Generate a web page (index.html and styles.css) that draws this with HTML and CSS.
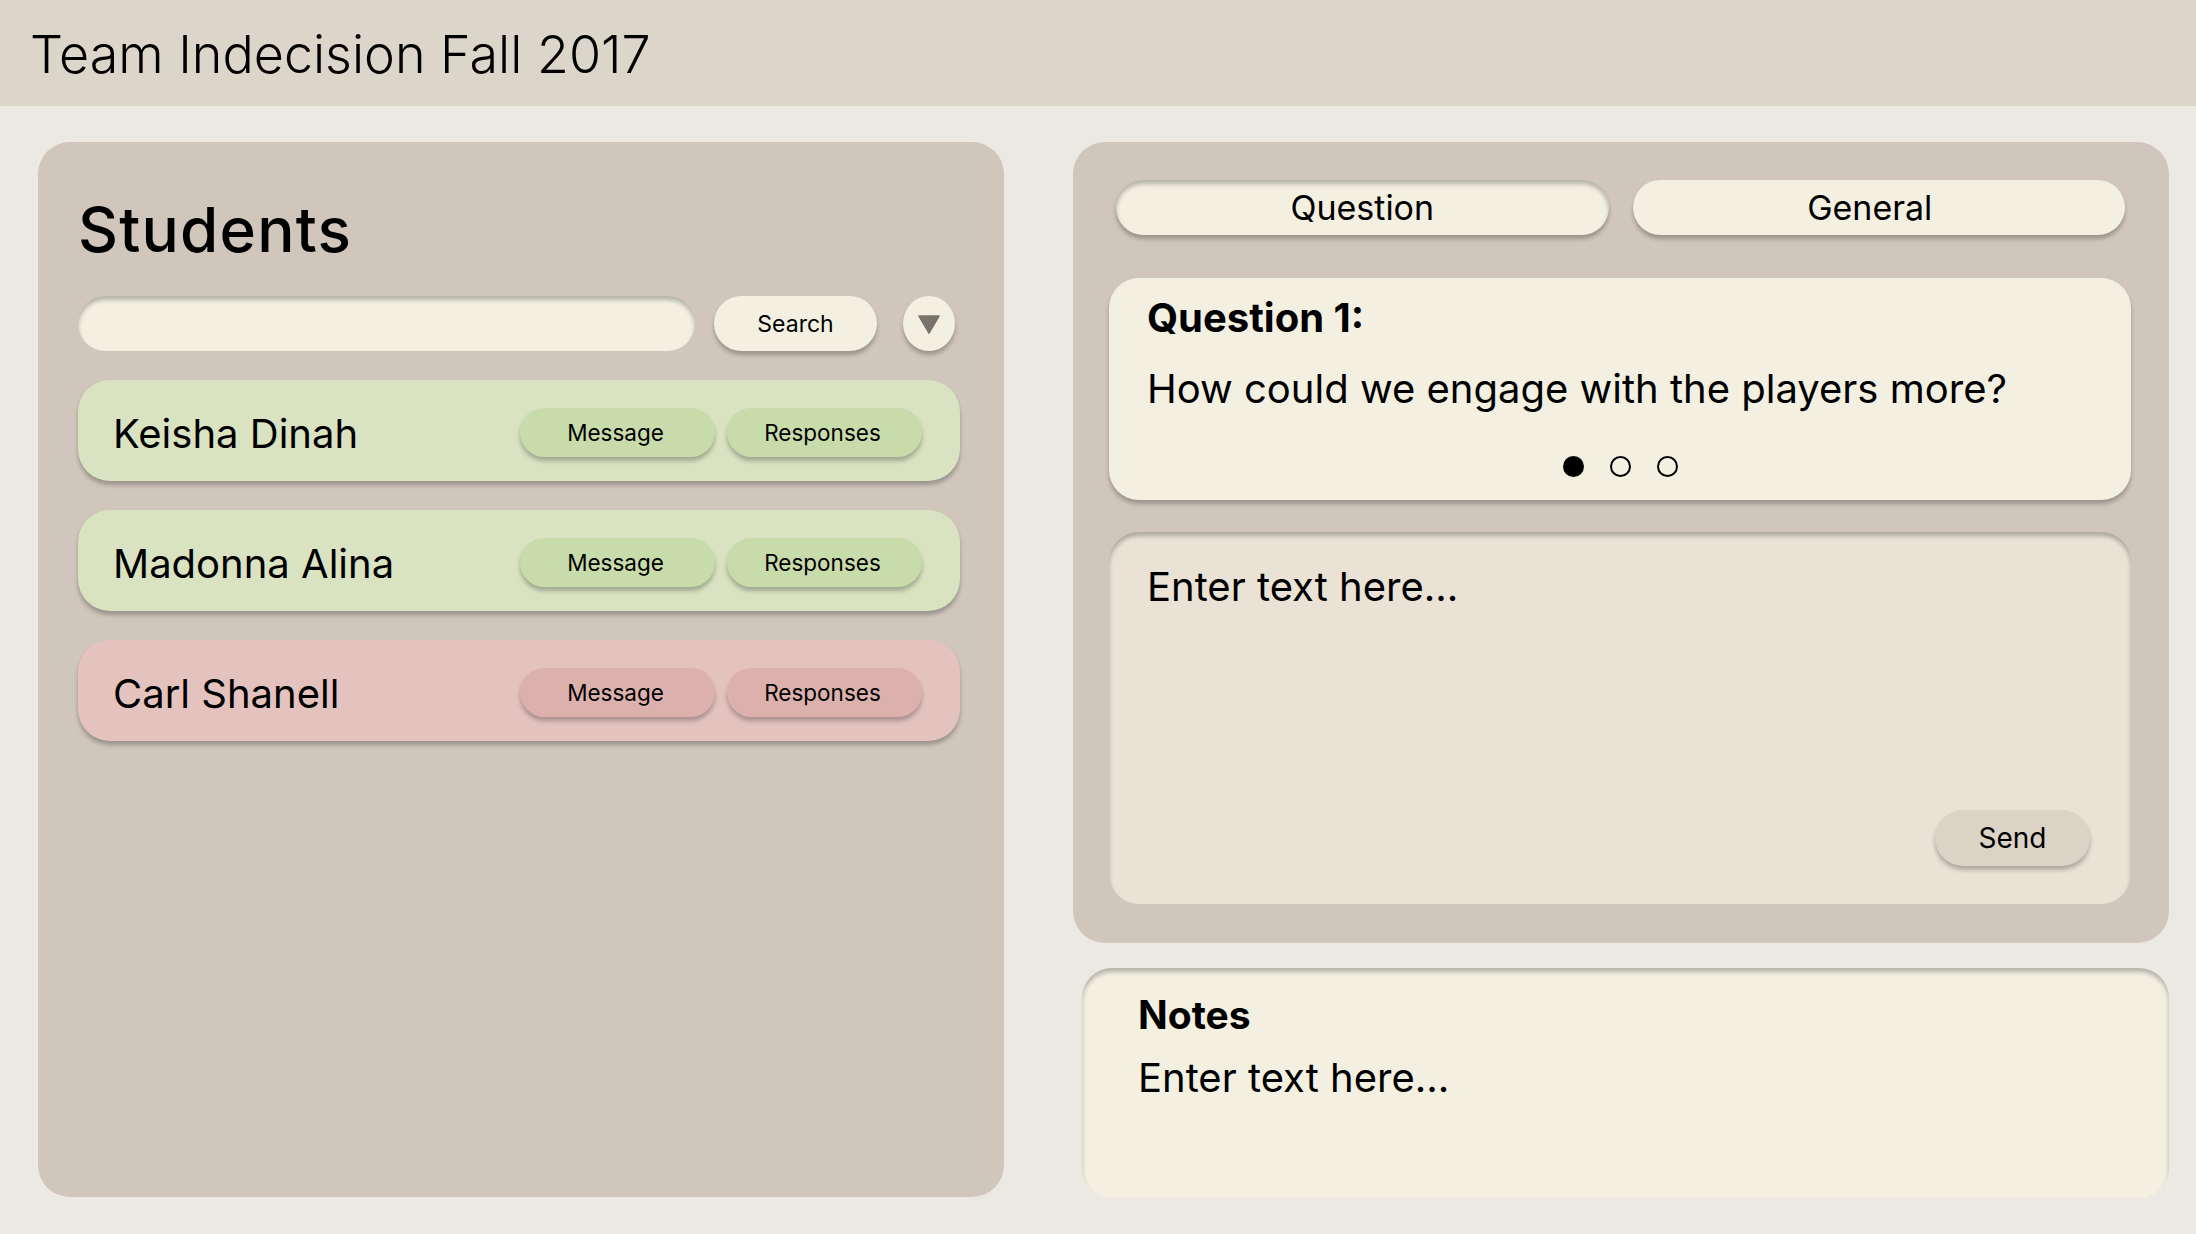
FILE: index.html
```html
<!DOCTYPE html>
<html lang="en">
<head>
<meta charset="utf-8">
<title>Team Indecision Fall 2017</title>
<link rel="stylesheet" href="styles.css">
</head>
<body>
<header class="topbar">
  <h1 class="title">Team Indecision Fall 2017</h1>
</header>
<main class="main">
  <section class="students">
    <h2 class="students-title">Students</h2>
    <div class="search-row">
      <div class="search-input"></div>
      <button class="search-btn">Search</button>
      <button class="filter-btn" aria-label="Filter">
        <svg width="22" height="19" viewBox="0 0 22 19"><path d="M1 1 H21 L11 18 Z" fill="#78746c" stroke="#78746c" stroke-width="1.5" stroke-linejoin="round"/></svg>
      </button>
    </div>
    <ul class="student-list">
      <li class="student good">
        <span class="student-name">Keisha Dinah</span>
        <div class="student-actions">
          <button class="pill">Message</button>
          <button class="pill">Responses</button>
        </div>
      </li>
      <li class="student good">
        <span class="student-name">Madonna Alina</span>
        <div class="student-actions">
          <button class="pill">Message</button>
          <button class="pill">Responses</button>
        </div>
      </li>
      <li class="student bad">
        <span class="student-name">Carl Shanell</span>
        <div class="student-actions">
          <button class="pill">Message</button>
          <button class="pill">Responses</button>
        </div>
      </li>
    </ul>
  </section>
  <div class="right-col">
    <section class="feedback">
      <div class="tabs">
        <button class="tab active">Question</button>
        <button class="tab tab-general">General</button>
      </div>
      <div class="question-card">
        <h3 class="q-title">Question 1:</h3>
        <p class="q-text">How could we engage with the players more?</p>
        <div class="dots">
          <span class="dot on"></span>
          <span class="dot"></span>
          <span class="dot"></span>
        </div>
      </div>
      <div class="answer">
        <p class="placeholder">Enter text here...</p>
        <button class="send-btn">Send</button>
      </div>
    </section>
    <section class="notes">
      <h3 class="notes-title">Notes</h3>
      <p class="placeholder">Enter text here...</p>
    </section>
  </div>
</main>
</body>
</html>
```
FILE: styles.css
```css
* { box-sizing: border-box; }
html, body { margin: 0; padding: 0; }
body {
  width: 2196px;
  height: 1234px;
  background: #ece9e2;
  font-family: Inter, "Noto Sans", sans-serif;
  color: #000;
  overflow: hidden;
}
button {
  font-family: inherit;
  border: none;
  padding: 0;
  color: #000;
  cursor: pointer;
}
.topbar {
  height: 106px;
  background: #dcd5ca;
  padding: 29px 0 0 30px;
}
.title {
  margin: 0;
  font-size: 52px;
  line-height: 52px;
  font-weight: 300;
}
.main {
  display: flex;
  padding: 36px 27px 0 38px;
  gap: 69px;
}
.students {
  width: 966px;
  height: 1055px;
  background: #d0c6bc;
  border-radius: 32px;
  padding: 57px 44px 0 40px;
}
.students-title {
  margin: 0;
  font-size: 62px;
  line-height: 62px;
  font-weight: 500;
  letter-spacing: 1.2px;
}
.search-row {
  display: flex;
  align-items: center;
  margin-top: 35px;
  height: 55px;
}
.search-input {
  width: 617px;
  height: 55px;
  background: #f3f0e2;
  border-radius: 28px;
  box-shadow: inset 0 4px 4px rgba(0, 0, 0, 0.25);
}
.search-btn {
  margin-left: 19px;
  width: 163px;
  height: 55px;
  border-radius: 28px;
  background: #f3f0e2;
  font-size: 23px;
  box-shadow: 0 4px 4px rgba(0, 0, 0, 0.25);
}
.filter-btn {
  margin-left: 26px;
  width: 52px;
  height: 55px;
  border-radius: 50%;
  background: #f3f0e2;
  display: flex;
  align-items: center;
  justify-content: center;
  padding-top: 2px;
  box-shadow: 0 4px 4px rgba(0, 0, 0, 0.25);
}
.student-list {
  list-style: none;
  margin: 29px 0 0;
  padding: 0;
  display: flex;
  flex-direction: column;
  gap: 29px;
}
.student {
  height: 101px;
  border-radius: 32px;
  display: flex;
  align-items: center;
  justify-content: space-between;
  padding: 0 38px 0 35px;
  box-shadow: 0 4px 4px rgba(0, 0, 0, 0.25);
}
.student.good { background: #d9e3c1; }
.student.bad { background: #e4c3bf; }
.student-name {
  font-size: 40px;
  line-height: 40px;
  font-weight: 400;
  padding-top: 7px;
}
.student-actions {
  display: flex;
  gap: 12px;
  padding-top: 3px;
}
.pill {
  width: 195px;
  height: 49px;
  border-radius: 25px;
  font-size: 22.5px;
  padding-right: 4px;
  box-shadow: 0 4px 4px rgba(0, 0, 0, 0.25);
}
.good .pill { background: #c8dbaa; }
.bad .pill { background: #dcb1ad; }
.right-col {
  width: 1096px;
  display: flex;
  flex-direction: column;
  gap: 25px;
}
.feedback {
  height: 801px;
  background: #d0c6bc;
  border-radius: 32px;
  padding: 38px 38px 0 36px;
}
.tabs {
  display: grid;
  grid-template-columns: 1fr 1fr;
  gap: 24px;
  padding: 0 6px 0 7px;
}
.tab {
  height: 55px;
  border-radius: 28px;
  background: #f3f0e2;
  font-size: 34px;
  line-height: 34px;
  box-shadow: 0 4px 4px rgba(0, 0, 0, 0.25);
}
.tab-general { padding-right: 18px; }
.tab.active {
  box-shadow: inset 0 4px 4px rgba(0, 0, 0, 0.25), 0 4px 4px rgba(0, 0, 0, 0.25);
}
.question-card {
  margin-top: 43px;
  height: 222px;
  background: #f3f0e2;
  border-radius: 30px;
  padding: 20px 38px 0 38px;
  box-shadow: 0 4px 4px rgba(0, 0, 0, 0.25);
}
.q-title {
  margin: 0;
  font-size: 40px;
  line-height: 40px;
  font-weight: 700;
}
.q-text {
  margin: 31px 0 0;
  font-size: 40px;
  line-height: 40px;
  font-weight: 400;
}
.dots {
  display: flex;
  justify-content: center;
  gap: 26px;
  margin-top: 47px;
}
.dot {
  width: 21px;
  height: 21px;
  border-radius: 50%;
  border: 2px solid #000;
}
.dot.on { background: #000; }
.answer {
  margin-top: 32px;
  height: 372px;
  background: #e9e2d5;
  border-radius: 30px;
  padding: 35px 41px 38px 38px;
  display: flex;
  flex-direction: column;
  justify-content: space-between;
  align-items: flex-start;
  box-shadow: inset 0 4px 4px rgba(0, 0, 0, 0.25);
}
.placeholder {
  margin: 0;
  font-size: 40px;
  line-height: 40px;
  font-weight: 400;
}
.send-btn {
  align-self: flex-end;
  width: 155px;
  height: 56px;
  border-radius: 28px;
  background: #dcd3c7;
  font-size: 28px;
  box-shadow: 0 4px 4px rgba(0, 0, 0, 0.25);
}
.notes {
  margin-left: 9px;
  height: 230px;
  background: #f3f0e2;
  border-radius: 30px;
  padding: 27px 40px 0 56px;
  box-shadow: inset 0 4px 4px rgba(0, 0, 0, 0.25);
}
.notes-title {
  margin: 0 0 24px;
  font-size: 39px;
  line-height: 39px;
  font-weight: 700;
}
```
